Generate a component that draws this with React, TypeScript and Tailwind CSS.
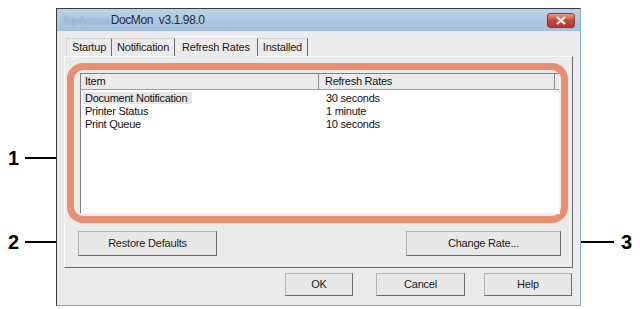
import React from 'react'

const rows = [
  { item: 'Document Notification', rate: '30 seconds', sel: true },
  { item: 'Printer Status', rate: '1 minute' },
  { item: 'Print Queue', rate: '10 seconds' },
]

function Btn({ label, className = '' }: { label: string; className?: string }) {
  return (
    <div
      className={`flex items-center justify-center h-[23px] bg-[#e8e8e8] border border-[#b4b4b4] border-b-[#6a6a6a] border-r-[#6a6a6a] text-[11px] tracking-[-0.2px] text-[#1a1a1a] ${className}`}
    >
      {label}
    </div>
  )
}

export default function App() {
  return (
    <div
      className="w-[640px] h-[309px] bg-white relative overflow-hidden"
      style={{ fontFamily: '"Liberation Sans", Arial, sans-serif' }}
    >
      {/* callouts */}
      <div className="absolute left-[8px] top-[148px] flex items-center">
        <span className="text-[20px] font-bold text-black leading-none">1</span>
        <span className="w-[38px] h-[2px] bg-black ml-[6px]" />
      </div>
      <div className="absolute left-[8px] top-[232px] flex items-center">
        <span className="text-[20px] font-bold text-black leading-none">2</span>
        <span className="w-[66px] h-[2px] bg-black ml-[6px]" />
      </div>
      <div className="absolute left-[522px] top-[232px] flex items-center">
        <span className="w-[92px] h-[2px] bg-black mr-[7px]" />
        <span className="text-[20px] font-bold text-black leading-none">3</span>
      </div>

      {/* window */}
      <div className="absolute left-[56px] top-[8px] w-[525px] h-[298px] border border-[#3a3a3a] border-b-[#5fb7cf] border-r-[#7eb4d8] bg-[#ebebeb] flex flex-col">
        <div className="h-[22px] bg-gradient-to-b from-[#bcd2e8] to-[#a3bfdc] flex items-center pl-[5px] pr-[5px]">
          <span className="text-[11px] text-[#8fa6c0] blur-[1.2px] tracking-[-0.5px]">TopAccess</span>
          <span className="text-[12px] text-[#1e2a3a] tracking-[-0.4px]">DocMon&nbsp; v3.1.98.0</span>
          <div className="ml-auto w-[28px] h-[15px] rounded-[3px] bg-gradient-to-b from-[#e59a8c] via-[#c9463a] to-[#b8362a] border border-[#8a3a30] flex items-center justify-center">
            <svg width="10" height="9" viewBox="0 0 10 9">
              <path d="M1 1 L9 8 M9 1 L1 8" stroke="white" strokeWidth="2.2" />
            </svg>
          </div>
        </div>

        <div className="flex-1 px-[7px] pt-[6px] flex flex-col">
          {/* tabs */}
          <div className="flex items-end h-[19px] pl-[2px] text-[11px] text-[#1a1a1a] tracking-[-0.2px]">
            <div className="h-[18px] px-[5px] flex items-center border-l border-t border-[#d6d6d6] border-r-[#6b6b6b] border-r bg-[#ebebeb]">Startup</div>
            <div className="h-[18px] px-[5px] flex items-center border-t border-[#d6d6d6] border-r-[#6b6b6b] border-r">Notification</div>
            <div className="h-[21px] px-[7px] flex items-start pt-[2px] bg-[#ebebeb] border-t border-[#fafafa] relative top-[1px] z-10">Refresh Rates</div>
            <div className="h-[18px] px-[5px] flex items-center border-l border-[#6b6b6b] border-t border-t-[#d6d6d6] border-r border-r-[#6b6b6b]">Installed</div>
          </div>

          {/* panel */}
          <div className="w-[509px] h-[212px] border border-[#fafafa] border-r-[#6b6b6b] border-b-[#6b6b6b] flex flex-col pl-[2px] pr-[4px] pt-[6px]">
            <div className="h-[160px] rounded-[16px] border-[7px] border-[#eb8d71] pt-[3px] pb-[2px] pl-[6px] pr-[1px] flex">
              <div className="flex-1 bg-white border border-[#828282] border-b-[#f4f4f4] border-r-[#f4f4f4] flex flex-col text-[11px] text-[#111] tracking-[-0.25px]">
                <div className="h-[16px] flex bg-[#ebebeb] border-b border-[#a0a0a0] mb-[2px]">
                  <div className="w-[238px] pl-[4px] border-r border-[#8c8c8c] leading-[15px]">Item</div>
                  <div className="flex-1 pl-[6px] border-r border-[#8c8c8c] mr-[4px] leading-[15px]">Refresh Rates</div>
                </div>
                {rows.map((r) => (
                  <div key={r.item} className="flex h-[13px] leading-[13px]">
                    <div className="w-[239px] pl-[2px]">
                      <span className={r.sel ? 'bg-[#e6e6e6] pl-[2px] pr-[5px]' : 'pl-[2px]'}>{r.item}</span>
                    </div>
                    <div className="pl-[6px]">{r.rate}</div>
                  </div>
                ))}
              </div>
            </div>
            <div className="flex justify-between pl-[11px] pr-[7px] mt-[8px]">
              <Btn label="Restore Defaults" className="w-[139px] h-[25px]" />
              <Btn label="Change Rate..." className="w-[155px] h-[25px]" />
            </div>
          </div>

          {/* bottom buttons */}
          <div className="flex justify-end mt-[5px] pr-[1px]">
            <Btn label="OK" className="w-[68px]" />
            <Btn label="Cancel" className="w-[89px] ml-[23px]" />
            <Btn label="Help" className="w-[88px] ml-[19px]" />
          </div>
        </div>
      </div>
    </div>
  )
}
